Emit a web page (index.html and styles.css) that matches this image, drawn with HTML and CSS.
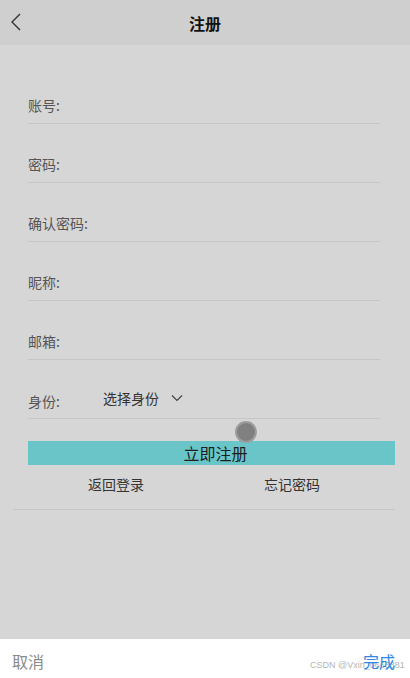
FILE: index.html
```html
<!DOCTYPE html>
<html lang="zh">
<head>
<meta charset="utf-8">
<link rel="stylesheet" href="styles.css">
</head>
<body>
<div class="page">
  <header class="topbar">
    <svg class="back" width="12" height="18" viewBox="0 0 12 18"><path d="M10 1 L2 9 L10 17" fill="none" stroke="#333" stroke-width="1.4"/></svg>
    <div class="title">注册</div>
  </header>
  <main class="form">
    <div class="row"><span class="label">账号:</span></div>
    <div class="row"><span class="label">密码:</span></div>
    <div class="row"><span class="label">确认密码:</span></div>
    <div class="row"><span class="label">昵称:</span></div>
    <div class="row"><span class="label">邮箱:</span></div>
    <div class="row id-row">
      <span class="label">身份:</span>
      <span class="select">选择身份
        <svg class="caret" width="12" height="8" viewBox="0 0 12 8"><path d="M1 1.5 L6 6.5 L11 1.5" fill="none" stroke="#444" stroke-width="1.2"/></svg>
      </span>
    </div>
    <div class="btn-wrap">
      <span class="touch"></span>
      <div class="btn">立即注册</div>
    </div>
    <div class="links">
      <span class="link">返回登录</span>
      <span class="link">忘记密码</span>
    </div>
    <div class="divider"></div>
  </main>
  <footer class="picker">
    <span class="cancel">取消</span>
    <span class="done">完成</span>
    <span class="mark">CSDN @Vxin_0663381</span>
  </footer>
</div>
</body>
</html>
```
FILE: styles.css
```css
* { box-sizing: border-box; margin: 0; padding: 0; }
html, body { width: 410px; height: 678px; overflow: hidden; }
body { font-family: "Noto Sans CJK SC", "Noto Sans", sans-serif; background: #d6d6d6; }
.page { display: flex; flex-direction: column; height: 678px; }
.topbar { height: 45px; background: #cfcfcf; display: flex; align-items: center; justify-content: center; position: relative; flex-shrink: 0; }
.back { position: absolute; left: 10px; top: 13px; }
.title { font-size: 16px; font-weight: 700; color: #111; }
.form { flex: 1; padding-top: 20px; }
.row { margin: 0 30px 0 28px; height: 59px; border-bottom: 1px solid #c6c6c6; display: flex; align-items: flex-end; padding-bottom: 8px; }
.label { font-size: 14px; color: #555; line-height: 20px; }
.id-row { height: 59px; padding-bottom: 9px; }
.id-row .label { margin-bottom: -2px; }
.select { margin-left: 43px; font-size: 14px; color: #333; line-height: 20px; display: flex; align-items: center; position: relative; top: -1px; }
.caret { margin-left: 12px; }
.btn-wrap { position: relative; padding-top: 22px; margin: 0 15px 0 28px; }
.touch { position: absolute; left: 207px; top: 2px; width: 22px; height: 22px; border-radius: 50%; background: #808080; border: 2px solid #9c9c9c; }
.btn { height: 24px; background: #6ac5c8; color: #1e1e1e; font-size: 16px; line-height: 24px; text-align: center; padding-left: 8px; }
.links { display: flex; margin: 0 30px 0 28px; height: 44px; align-items: center; }
.link { flex: 1; text-align: center; font-size: 14px; color: #333; position: relative; top: -3px; }
.divider { margin: 0 15px 0 13px; border-bottom: 1px solid #c6c6c6; }
.picker { height: 39px; background: #fff; display: flex; align-items: center; justify-content: space-between; padding: 0 15px 0 12px; position: relative; flex-shrink: 0; }
.cancel { font-size: 16px; color: #8a8a8a; position: relative; top: 2px; }
.done { font-size: 16px; color: #2f89e3; position: relative; z-index: 1; top: 2px; }
.mark { position: absolute; left: 310px; top: 21px; font-family: "Liberation Sans", sans-serif; font-size: 9px; color: #b5b5b5; }
```
